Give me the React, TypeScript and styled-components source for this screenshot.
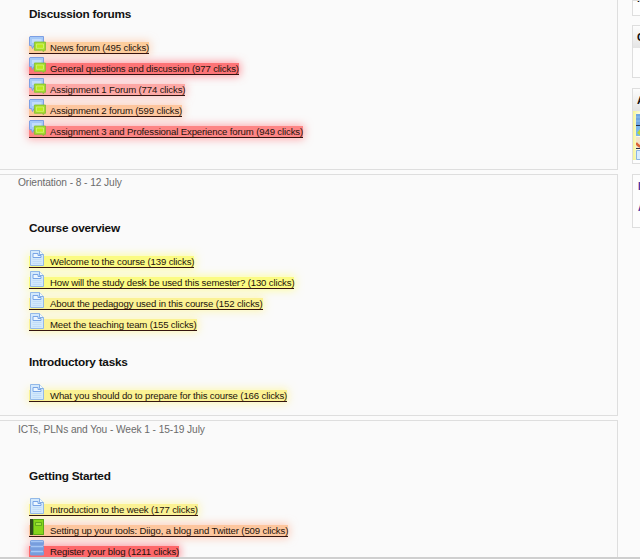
import React from "react";
import styled, { createGlobalStyle } from "styled-components";

const Global = createGlobalStyle`
  * { box-sizing: border-box; }
  body { margin: 0; background: #fbfbfb; overflow: hidden; font-family: "Liberation Sans", Arial, sans-serif; }
`;

const Page = styled.div`
  display: grid;
  grid-template-columns: 618px 1fr;
  column-gap: 14px;
  width: 640px;
  height: 557px;
  overflow: hidden;
`;

const Screen = styled.div`
  width: 640px;
  height: 559px;
  overflow: hidden;
  border-bottom: 2px solid #cfcfcf;
`;

const Main = styled.main`
  display: flex;
  flex-direction: column;
  gap: 4px;
`;

const Section = styled.section<{ $height: number; $first?: boolean }>`
  flex: none;
  height: ${(p) => p.$height}px;
  border: 1px solid #dedede;
  border-left: 0;
  border-top-width: ${(p) => (p.$first ? 0 : 1)}px;
  background: #fafafa;
`;

const Label = styled.div<{ $top: number }>`
  height: 41px;
  padding: ${(p) => p.$top}px 0 0 18px;
  font-size: 10.2px;
  line-height: 14px;
  letter-spacing: -0.08px;
  color: #6b6b6b;
  white-space: nowrap;
`;

const Heading = styled.h3<{ $height: number; $top: number }>`
  margin: 0;
  height: ${(p) => p.$height}px;
  padding: ${(p) => p.$top}px 0 0 29px;
  font-size: 11.8px;
  line-height: 14px;
  letter-spacing: -0.24px;
  font-weight: bold;
  color: #111;
`;

const List = styled.ul`
  margin: 0;
  padding: 0 0 0 29px;
  list-style: none;
`;

const Item = styled.li`
  display: flex;
  align-items: flex-end;
  height: 21.1px;
`;

const tones = {
  orange: ["#fdcd9c", "rgba(255,190,150,.65)"],
  red: ["#fd7477", "rgba(255,105,115,.7)"],
  pink: ["#fda8a6", "rgba(255,150,150,.6)"],
  coral: ["#fdc69e", "rgba(255,175,145,.65)"],
  rose: ["#fd8585", "rgba(255,120,125,.65)"],
  lemon: ["#fbfb83", "rgba(255,255,120,.7)"],
  yellow: ["#fbf294", "rgba(255,245,145,.7)"],
  scarlet: ["#fd676a", "rgba(255,95,105,.7)"],
};
type Tone = keyof typeof tones;

const Link = styled.a<{ $tone: Tone }>`
  display: flex;
  align-items: flex-end;
  gap: 5px;
  height: 12px;
  border-bottom: 1px solid #351510;
  background: ${(p) => tones[p.$tone][0]};
  box-shadow: 0 0 9px 1px ${(p) => tones[p.$tone][1]};
  color: #24130c;
  font-size: 9.6px;
  line-height: 11px;
  letter-spacing: -0.14px;
  white-space: nowrap;
  svg { flex: none; margin-bottom: 1px; }
`;

const Sidebar = styled.aside`
  display: flex;
  flex-direction: column;
  overflow: hidden;
`;

const Block = styled.div<{ $height: number; $gap: number }>`
  flex: none;
  width: 30px;
  height: ${(p) => p.$height}px;
  margin-bottom: ${(p) => p.$gap}px;
  border: 1px solid #dedede;
  background: #fdfdfd;
  overflow: hidden;
`;

const BlockTitle = styled.div`
  height: 22px;
  padding-left: 4px;
  background: linear-gradient(#fdfdfd, #e4e4e4);
  color: #111;
  font-size: 11px;
  line-height: 22px;
  font-weight: bold;
`;

const Cut = styled.div`
  padding-left: 4px;
  margin-top: -9px;
  font-size: 11px;
  line-height: 12px;
  font-weight: bold;
`;

const Shortcuts = styled.div`
  padding: 3px 0 0 3px;
  box-shadow: inset 3px 0 5px #f5f58c;
  svg { display: block; }
`;

const SideLink = styled.div<{ $top: number }>`
  padding: ${(p) => p.$top}px 0 0 5px;
  color: #4a2f9c;
  font-size: 10px;
  line-height: 12px;
  font-weight: bold;
`;

const ForumIcon = () => (
  <svg width="17" height="16" viewBox="0 0 17 16">
    <path d="M1 .5h13.5v9H5L3.5 12.5 2.5 9.5H.5V1Z" fill="#a5c9f8" stroke="#7c9fe3" />
    <path d="M3 3h9.5v4H3Z" fill="#c3dcfb" />
    <path d="M5.4 6h11.1v8.3h-1.8v1.2l-2-1.2H5.4V6Z" fill="#a6dc2a" stroke="#7fbd35" strokeWidth=".8" />
    <path d="M7.4 8h7.1v4.3H7.4Z" fill="#b9ea1c" stroke="#d6f47c" strokeWidth=".8" />
  </svg>
);

const PageIcon = () => (
  <svg width="16" height="16" viewBox="0 0 16 16">
    <path d="M1.5.5h9l4 4v11h-13Z" fill="#d3e9fc" stroke="#93b9e8" />
    <path d="M10.5.5v4h4" fill="#f2faff" stroke="#84aee2" />
    <path d="M4 3.5h5v2h3v2H4Z" fill="#edf7ff" stroke="#79a5e6" />
    <path d="M3.5 9.5h9M3.5 11.5h9M3.5 13.5h9" stroke="#c2ddf8" />
  </svg>
);

const BookIcon = () => (
  <svg width="16" height="16" viewBox="0 0 16 16">
    <path d="M1 0h14v16H1Z" fill="#80cc18" />
    <path d="M1 0h3v16H1Z" fill="#32491e" />
    <path d="M4.5.5h10v15h-10Z" fill="#87d51b" stroke="#58a719" />
    <path d="M6.5 3.5h6v3h-6Z" fill="#a3e53b" stroke="#569d1b" strokeWidth=".8" />
  </svg>
);

const DatabaseIcon = () => (
  <svg width="16" height="16" viewBox="0 0 16 16">
    {[0, 5, 10].map((y) => (
      <g key={y}>
        <rect x="1" y={y} width="14" height="5.5" rx="1.5" fill="#779ddd" />
        <path d={`M2 ${y + 1.5}h12`} stroke="#a6c7f5" strokeWidth="1.5" />
      </g>
    ))}
  </svg>
);

const ShortcutIcons = () => (
  <svg width="16" height="46" viewBox="0 0 16 46">
    <path d="M0 0h16v11H0Z" fill="#6fa6e2" />
    <path d="M0 3h16M0 7h16" stroke="#8fc0ee" />
    <path d="M0 11.5h16M0 34.5h16" stroke="#25304b" />
    <path d="M0 12h16v10H0Z" fill="#79b7ee" />
    <path d="M1 19l4-5v8Z" fill="#b8da36" />
    <path d="M0 23h16v11H0Z" fill="#f3e5c8" />
    <path d="M0 29q3 4 7 4" fill="none" stroke="#df6536" strokeWidth="2.5" />
    <path d="M.5 36.5h15v9H.5Z" fill="#d9edff" stroke="#8cb5e4" />
  </svg>
);

const icons = { forum: ForumIcon, page: PageIcon, book: BookIcon, database: DatabaseIcon };

const IconSlot = styled.span`
  display: flex;
  flex: none;
  width: 16px;
`;

const Activity = ({ icon, tone, children }: { icon: keyof typeof icons; tone: Tone; children: string }) => {
  const Icon = icons[icon];
  return (
    <Item>
      <Link $tone={tone}><IconSlot><Icon /></IconSlot><span>{children}</span></Link>
    </Item>
  );
};

export default function App() {
  return (
    <Screen>
      <Global />
      <Page>
        <Main>
          <Section $height={170} $first>
            <Heading $height={33} $top={7}>Discussion forums</Heading>
            <List>
              <Activity icon="forum" tone="orange">News forum (495 clicks)</Activity>
              <Activity icon="forum" tone="red">General questions and discussion (977 clicks)</Activity>
              <Activity icon="forum" tone="pink">Assignment 1 Forum (774 clicks)</Activity>
              <Activity icon="forum" tone="coral">Assignment 2 forum (599 clicks)</Activity>
              <Activity icon="forum" tone="rose">Assignment 3 and Professional Experience forum (949 clicks)</Activity>
            </List>
          </Section>
          <Section $height={242}>
            <Label $top={1}>Orientation - 8 - 12 July</Label>
            <Heading $height={30.45} $top={5}>Course overview</Heading>
            <List>
              <Activity icon="page" tone="lemon">Welcome to the course (139 clicks)</Activity>
              <Activity icon="page" tone="lemon">How will the study desk be used this semester? (130 clicks)</Activity>
              <Activity icon="page" tone="yellow">About the pedagogy used in this course (152 clicks)</Activity>
              <Activity icon="page" tone="yellow">Meet the teaching team (155 clicks)</Activity>
            </List>
            <Heading $height={50.4} $top={24}>Introductory tasks</Heading>
            <List>
              <Activity icon="page" tone="yellow">What you should do to prepare for this course (166 clicks)</Activity>
            </List>
          </Section>
          <Section $height={180}>
            <Label $top={2}>ICTs, PLNs and You - Week 1 - 15-19 July</Label>
            <Heading $height={32.5} $top={7}>Getting Started</Heading>
            <List>
              <Activity icon="page" tone="yellow">Introduction to the week (177 clicks)</Activity>
              <Activity icon="book" tone="coral">Setting up your tools: Diigo, a blog and Twitter (509 clicks)</Activity>
              <Activity icon="database" tone="scarlet">Register your blog (1211 clicks)</Activity>
            </List>
          </Section>
        </Main>
        <Sidebar>
          <Block $height={16} $gap={9}><Cut>M</Cut></Block>
          <Block $height={53} $gap={10}><BlockTitle>C</BlockTitle></Block>
          <Block $height={76} $gap={10}><BlockTitle>A</BlockTitle><Shortcuts><ShortcutIcons /></Shortcuts></Block>
          <Block $height={54} $gap={0}><SideLink $top={6}>L</SideLink><SideLink $top={9}>A</SideLink></Block>
        </Sidebar>
      </Page>
    </Screen>
  );
}
